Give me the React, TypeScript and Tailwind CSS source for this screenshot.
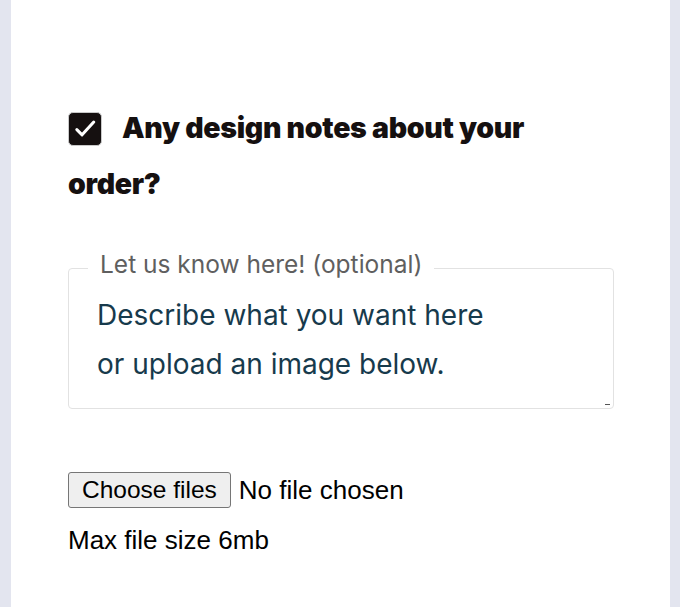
import React from "react";

const App = () => {
    return (
        <div className="flex h-[607px] w-[680px] bg-[#e3e5ef] pl-[11px] pr-[10px]">
            <div className="flex-1 bg-white pl-[57px] pr-[56px] pt-[100px]">
                <h2 className="w-[490px] font-['Inter',sans-serif] text-[28.5px] font-black leading-[56px] tracking-[-0.3px] text-[#151010]">
                    <span className="mr-[20px] inline-flex size-[34px] translate-y-[5px] items-center justify-center rounded-[5px] border border-[#c9c9c9] bg-[#151010] align-baseline">
                        <svg width="28" height="28" viewBox="0 0 24 24" fill="none" stroke="white" strokeWidth="2.6" strokeLinecap="round" strokeLinejoin="round">
                            <path d="M5 12.5l4.5 4.5L19.5 6" />
                        </svg>
                    </span>
                    Any design notes about your order?
                </h2>

                <fieldset className="relative mt-[41px] h-[156px] rounded-[4px] border border-[#e2e2e2] pl-[20px] pr-[4px]">
                    <legend className="-ml-[1px] px-[12px] pb-[8px] font-['Inter',sans-serif] text-[24.5px] leading-[22px] text-[#5f5f5f]">
                        Let us know here! (optional)
                    </legend>
                    <textarea
                        className="block h-[123px] w-full resize-none px-[8px] pt-[8px] font-['Inter',sans-serif] text-[28px] leading-[49px] text-[#173a4c] outline-none placeholder:text-[#173a4c]"
                        placeholder={"Describe what you want here\nor upload an image below."}
                    />
                    <span className="absolute bottom-[1px] right-[3px] h-[3px] w-[5px] border-t border-[#555]" />
                </fieldset>

                <div className="mt-[63px] font-['Liberation_Sans',Arial,sans-serif] text-[26px] text-black">
                    <label className="flex items-center">
                        <input type="file" multiple className="hidden" />
                        <span className="flex h-[36px] items-center rounded-[3px] border border-[#767676] bg-[#efefef] px-[13px] text-[24.5px] leading-[30px]">
                            Choose files
                        </span>
                        <span className="ml-[8px] leading-[30px]">No file chosen</span>
                    </label>
                    <p className="mt-[17px] leading-[30px]">Max file size 6mb</p>
                </div>
            </div>
        </div>
    );
};

export default App;
